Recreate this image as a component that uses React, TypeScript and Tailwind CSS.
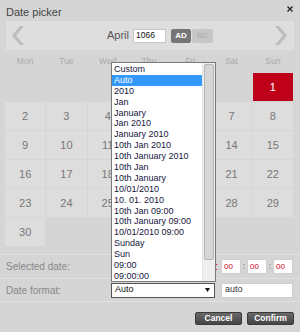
import React from 'react';

const weekdays = ['Mon', 'Tue', 'Wed', 'Thu', 'Fri', 'Sat', 'Sun'];

const formats = [
    'Custom', 'Auto', '2010', 'Jan', 'January', 'Jan 2010', 'January 2010',
    '10th Jan 2010', '10th January 2010', '10th Jan', '10th January',
    '10/01/2010', '10. 01. 2010', '10th Jan 09:00', '10th January 09:00',
    '10/01/2010 09:00', 'Sunday', 'Sun', '09:00', '09:00:00',
];

const Chevron = ({ flip }: { flip?: boolean }) => (
    <svg width="12" height="19" viewBox="0 0 12 19" className={flip ? 'scale-x-[-1]' : ''}>
        <polygon points="8,0 12,0 4,9.5 12,19 8,19 0,9.5" fill="#bdbdbd" />
    </svg>
);

export default function App() {
    // April 1066 starts on a Sunday: six empty cells first
    const cells: (number | null)[] = [...Array(6).fill(null), ...Array.from({ length: 30 }, (_, i) => i + 1)];

    return (
        <div className="relative w-[300px] h-[332px] bg-[#d5d5d5] overflow-hidden" style={{ fontFamily: '"Liberation Sans", Arial, sans-serif' }}>
            {/* Header */}
            <div className="h-[21px] flex items-start justify-between pl-[6px] pr-[7px] pt-[5px]">
                <span className="text-[11px] leading-[14px] text-[#444]">Date picker</span>
                <svg width="6" height="6" viewBox="0 0 6 6" className="mt-[1px]">
                    <path d="M0.5 0.5 L5.5 5.5 M5.5 0.5 L0.5 5.5" stroke="#222" strokeWidth="1.3" />
                </svg>
            </div>

            {/* Month / year bar */}
            <div className="mx-[6px] h-[29px] bg-[#dedede] flex items-center">
                <div className="ml-[6px]"><Chevron /></div>
                <span className="ml-[83px] text-[11px] text-[#555]">April</span>
                <div className="ml-[4px] w-[33px] h-[14px] bg-white border border-[#c8c8c8] flex items-center pl-[2px] text-[8.5px] text-[#111]">1066</div>
                <div className="ml-[5px] w-[20px] h-[14px] bg-[#767676] rounded-[2px] flex items-center justify-center text-[8px] font-bold text-white">AD</div>
                <div className="ml-[1px] w-[21px] h-[14px] bg-[#c6c6c6] rounded-[2px] flex items-center justify-center text-[8px] text-[#a8a8a8]">BC</div>
                <div className="ml-auto mr-[7px]"><Chevron flip /></div>
            </div>

            {/* Weekdays */}
            <div className="ml-[5px] w-[288px] h-[23px] grid grid-cols-7 gap-px items-center">
                {weekdays.map((d) => (
                    <span key={d} className="text-center text-[8.5px] text-[#aaa]">{d}</span>
                ))}
            </div>

            {/* Days */}
            <div className="ml-[5px] w-[288px] grid grid-cols-7 gap-px">
                {cells.map((n, i) => (
                    <div
                        key={i}
                        className={`h-[28px] flex items-center justify-center text-[11px] ${
                            n === null ? '' : n === 1 ? 'bg-[#be0019] text-white' : 'bg-[#dddddd] text-[#777]'
                        }`}
                    >
                        {n}
                    </div>
                ))}
            </div>

            {/* Selected date */}
            <div className="mt-[8px] h-[24px] border-t border-[#e0e0e0] flex items-center pl-[6px]">
                <span className="w-[105px] text-[10px] text-[#888]">Selected date:</span>
                <div className="w-[107px] overflow-hidden text-right text-[10px] text-[#cc0022] whitespace-nowrap">1. April 1066 AD:</div>
                <div className="ml-[3px] w-[20px] h-[15px] bg-white border border-[#cfcfcf] flex items-center pl-[2px] text-[8px] text-[#cc0022]">00</div>
                <span className="w-[6px] text-center text-[9px] font-bold text-[#999]">:</span>
                <div className="w-[20px] h-[15px] bg-white border border-[#cfcfcf] flex items-center pl-[2px] text-[8px] text-[#cc0022]">00</div>
                <span className="w-[6px] text-center text-[9px] font-bold text-[#999]">:</span>
                <div className="w-[20px] h-[15px] bg-white border border-[#cfcfcf] flex items-center pl-[2px] text-[8px] text-[#cc0022]">00</div>
            </div>

            {/* Date format */}
            <div className="h-[24px] border-t border-b border-[#e0e0e0] flex items-center pl-[6px]">
                <span className="w-[105px] text-[10px] text-[#888]">Date format:</span>
                <div className="w-[104px] h-[15px] bg-white border border-[#555] flex items-center justify-between pl-[3px] pr-[4px] text-[9px] text-[#111]">
                    Auto
                    <svg width="5" height="4" viewBox="0 0 5 4"><polygon points="0,0 5,0 2.5,4" fill="#111" /></svg>
                </div>
                <div className="ml-[6px] w-[72px] h-[15px] bg-white border border-[#cfcfcf] flex items-center pl-[3px] text-[9px] text-[#333]">auto</div>
            </div>

            {/* Buttons */}
            <div className="mt-[10px] flex justify-end gap-[5px] pr-[6px]">
                <button className="w-[47px] h-[13px] rounded-[2px] bg-gradient-to-b from-[#6a6a6a] to-[#454545] border border-[#3a3a3a] text-[8.5px] font-bold leading-none text-white">Cancel</button>
                <button className="w-[47px] h-[13px] rounded-[2px] bg-gradient-to-b from-[#6a6a6a] to-[#454545] border border-[#3a3a3a] text-[8.5px] font-bold leading-none text-white">Confirm</button>
            </div>

            {/* Open format list */}
            <div className="absolute left-[111px] top-[62px] w-[105px] h-[220px] bg-white border border-[#7a7a7a] flex">
                <div className="flex-1 pt-[1px]">
                    {formats.map((f) => (
                        <div
                            key={f}
                            className={`h-[10.9px] leading-[10.9px] pl-[2px] text-[9px] whitespace-nowrap overflow-hidden ${
                                f === 'Auto' ? 'bg-[#3399ff] text-white' : 'text-[#161640]'
                            }`}
                        >
                            {f}
                        </div>
                    ))}
                </div>
                <div className="w-[13px] bg-[#efefef] border-l border-[#e4e4e4] pt-[1px] px-[1px]">
                    <div className="h-[196px] bg-[#d6d6d6] border border-[#b4b4b4] rounded-[2px]" />
                </div>
            </div>
        </div>
    );
}
